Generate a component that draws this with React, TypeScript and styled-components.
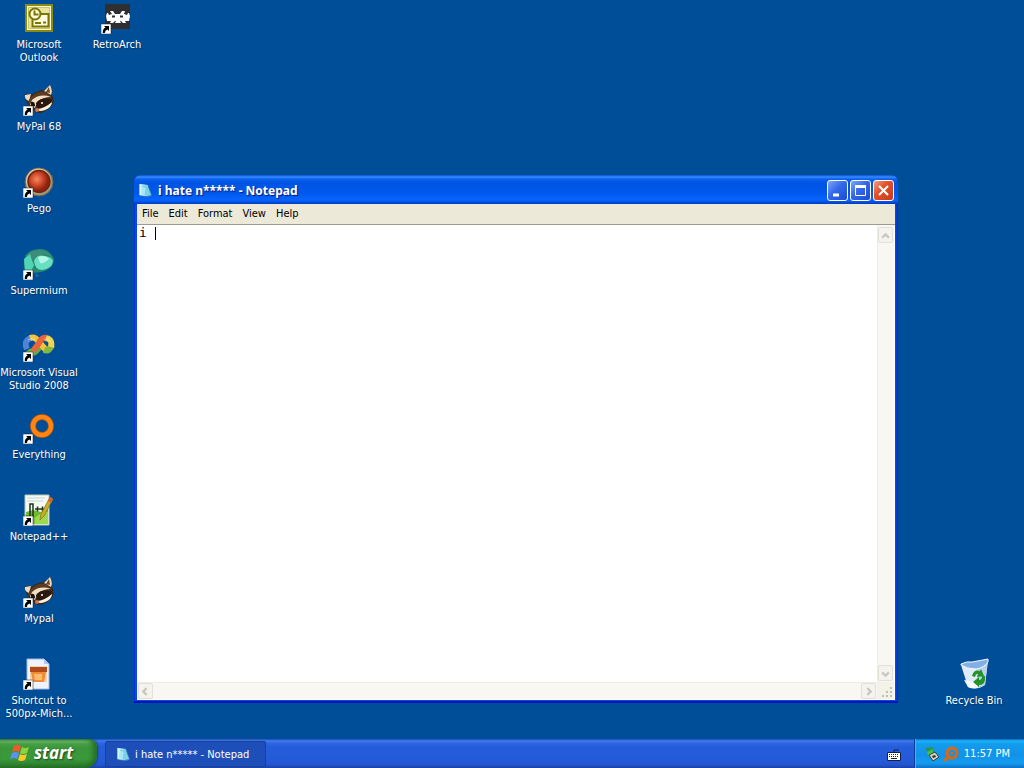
import React, { useState } from "react";
import styled, { createGlobalStyle, css } from "styled-components";

const Global = createGlobalStyle`
  * { box-sizing: border-box; }
  body { margin: 0; }
  button, input, textarea { font: inherit; margin: 0; }
  svg { display: block; flex: none; }
`;

const uiFont = css`
  font-family: "DejaVu Sans Condensed", Tahoma, sans-serif;
  font-size: 11px;
  line-height: 13px;
`;

const Screen = styled.div`
  display: flex;
  flex-direction: column;
  min-height: 100vh;
  background: #004e98;
  ${uiFont}
`;

const Desktop = styled.main`
  flex: 1;
  position: relative;
  display: flex;
  padding-right: 11px;
`;

const IconColumn = styled.div<{ $end?: boolean }>`
  display: flex;
  flex-direction: column;
  width: 78px;
  ${(p) => p.$end && css`margin-left: auto; padding-bottom: 1px; justify-content: flex-end;`}
`;

const Shortcut = styled.button`
  display: flex;
  flex-direction: column;
  align-items: center;
  gap: 4px;
  height: 82px;
  padding: 2px 0 0;
  border: 0;
  background: none;
  color: #fff;
  white-space: pre;
  text-shadow: 1px 1px 1px #003468;
`;

const NotepadWindow = styled.section`
  position: absolute;
  top: 175px;
  left: 134px;
  right: 126px;
  bottom: 36px;
  display: flex;
  flex-direction: column;
  padding: 0 3px 3px;
  border-radius: 7px 7px 0 0;
  background: linear-gradient(90deg, #0019cf 0, #0a4be8 1px, #0a46e6 2px, #0a46e6 calc(100% - 2px), #001fc0 100%);
  box-shadow: inset 0 -2px 0 #0016b8;
`;

const TitleBar = styled.header`
  display: flex;
  align-items: center;
  gap: 2px;
  height: 29px;
  margin: 0 -3px;
  padding: 2px 4px 0;
  border-radius: 7px 7px 0 0;
  background: linear-gradient(#0a4fd0 0, #3a8cff 2px, #0a62f0 4px, #0054e3 8px, #0058ec 18px, #0665ff 25px, #0450df 27px, #0038c0 29px);
`;

const Title = styled.h1`
  flex: 1;
  margin: 0;
  padding: 1px 0 0 3px;
  color: #fff;
  font-family: "Noto Sans", "Trebuchet MS", sans-serif;
  font-size: 12px;
  line-height: 18px;
  font-weight: 700;
  text-shadow: 1px 1px 1px #0a1883;
`;

const CaptionButton = styled.button<{ $close?: boolean }>`
  display: grid;
  place-items: center;
  width: 21px;
  height: 21px;
  padding: 0;
  border: 1px solid #fff;
  border-radius: 3px;
  background: ${(p) =>
    p.$close
      ? "linear-gradient(135deg, #f0a088 0, #e0532c 40%, #c83a14 100%)"
      : "linear-gradient(135deg, #7ea6f8 0, #3468ea 45%, #1c4cd0 100%)"};
`;
const Captions = styled.div`
  display: flex;
  gap: 2px;
`;

const MenuBar = styled.nav`
  display: flex;
  height: 20px;
  background: #ece9d8;
`;

const MenuItem = styled.button`
  padding: 0 5px 2px;
  border: 0;
  background: none;
  color: #000;
`;

const Editor = styled.div`
  flex: 1;
  position: relative;
  display: grid;
  grid-template-columns: 1fr 17px;
  grid-template-rows: 1fr 17px;
  padding-right: 1px;
  padding-bottom: 1px;
  border-top: 1px solid #9d9c92;
  background: #fefefd;
`;

const TextBox = styled.textarea`
  border: 0;
  outline: 0;
  resize: none;
  padding: 1px 2px;
  background: #fff;
  color: #000;
  font-family: "DejaVu Sans Mono", "Lucida Console", monospace;
  font-size: 13px;
  line-height: 14px;
  overflow: hidden;
`;

const Caret = styled.span`
  position: absolute;
  left: 18px;
  top: 2px;
  width: 1px;
  height: 13px;
  background: #000;
`;

const Track = styled.div<{ $horizontal?: boolean }>`
  display: flex;
  flex-direction: ${(p) => (p.$horizontal ? "row" : "column")};
  justify-content: space-between;
  padding: ${(p) => (p.$horizontal ? "0 1px" : "2px 0 1px")};
  background: #f8f7f2;
  border: 0 solid #eeede5;
  border-width: ${(p) => (p.$horizontal ? "1px 0 0" : "0 0 0 1px")};
`;

const ScrollButton = styled.button`
  display: grid;
  place-items: center;
  width: 15px;
  height: 16px;
  padding: 0;
  border: 1px solid #e2e0d6;
  border-radius: 2px;
  background: #f4f3ee;
`;

const Grip = styled.div`
  display: grid;
  place-items: end;
  background: #f3f2e8;
`;

const Taskbar = styled.footer`
  display: flex;
  height: 29px;
  background: linear-gradient(#1f48b8 0, #3f80ee 2px, #2e66e2 4px, #245ddb 8px, #245ad8 22px, #2355cc 26px, #1941a5 29px);
`;

const StartButton = styled.button`
  display: flex;
  align-items: center;
  gap: 3px;
  width: 97px;
  padding: 0 0 1px 10px;
  border: 0;
  border-radius: 0 8px 12px 0;
  background: linear-gradient(#2f7a30 0, #6dbb6a 2px, #48a046 5px, #3a963a 9px, #3b983b 20px, #2f8530 25px, #246c24 29px);
  box-shadow: inset -4px 0 5px #256f26, 1px 0 2px #1a3f90;
  color: #fff;
  font-family: "Noto Sans", "Trebuchet MS", sans-serif;
  font-size: 17px;
  line-height: 20px;
  font-style: italic;
  font-weight: 700;
  text-shadow: 1px 1px 2px #1a441a;
`;

const TaskButton = styled.button`
  display: flex;
  align-items: center;
  gap: 4px;
  width: 161px;
  height: 26px;
  margin: 2px auto 0 8px;
  padding: 0 10px;
  border: 1px solid #1a3f9c;
  border-radius: 2px;
  background: #1e4fb9;
  color: #fff;
  white-space: nowrap;
`;

const LanguageButton = styled.button`
  padding: 2px 13px 0;
  border: 0;
  background: none;
`;

const Tray = styled.div`
  display: flex;
  align-items: center;
  gap: 3px;
  padding: 0 14px 0 9px;
  border-left: 1px solid #0c3c9c;
  background: linear-gradient(#0d66c0 0, #19b4f8 2px, #139ced 5px, #1292e8 16px, #149cf0 24px, #0f6fc4 29px);
  box-shadow: inset 1px 0 0 #2cc0f8;
  color: #fff;
`;

const Clock = styled.time`
  padding-left: 2px;
`;

const Arrow = () => (
  <g>
    <path d="M0 22h10v10H0z" fill="#fff" stroke="#222" strokeWidth=".5" />
    <path d="M3 24h5v5L6.400 27.400Q4 28 3.800 31H1.800Q1.500 27 4.600 25.600z" fill="#000" />
  </g>
);

const Pic = ({ children }: { children: React.ReactNode }) => (
  <svg width="32" height="32" viewBox="0 0 32 32" aria-hidden="true">
    {children}
  </svg>
);

const Outlook = () => (
  <Pic>
    <path d="M3 3h26v26H3z" fill="#f7f5dd" stroke="#8c8a12" strokeWidth="2" />
    <path d="M5.500 5.500h21v21h-21z" fill="#e9e5a0" stroke="#c9c566" />
    <path d="M16 12h9.500v12.500h-16v-7" fill="#fffbe0" stroke="#7a7600" strokeWidth="2" />
    <circle cx="12" cy="12" r="5.500" fill="#fffbe0" stroke="#7a7600" strokeWidth="2" />
    <path d="M11.500 8.500v4h4M12 21h6M20 20.500h3" fill="none" stroke="#7a7600" strokeWidth="2" />
  </Pic>
);

const RetroArch = () => (
  <Pic>
    <path d="M4 2h25v25H4z" fill="#2f2e31" />
    <path d="M9 9h3l2 3h5l2-3h3l-1 3 3 1 1-2h1l1 3-1 5h-4l1 2h-3l-2-2h-1l1 2h-6l1-2h-1l-2 2H9l1-2H6l-1-5 1-3h1l1 2 3-1z" fill="#fff" />
    <path d="M11 13.500h3v2h-3zM19 13.500h3v2h-3z" fill="#2c2d33" />
    <Arrow />
  </Pic>
);

const Raccoon = () => (
  <Pic>
    <path d="M2 13Q1 9 4 10l4 1q7-5 14-5l5-5q3 4 2 10 3 6 0 11l-8 6q-8 3-11-3Q3 20 2 13z" fill="#3b2a1f" />
    <path d="M21 7l6-6q3 6 1 10z" fill="#f0d9b4" />
    <path d="M23 8l3-5 1 6z" fill="#6b4528" />
    <path d="M2 11l6-1-2 7q-5-2-4-6z" fill="#e9dcc3" />
    <path d="M8 13q8-7 16-5l4 6q-8-4-13-1l-5 8q-4 0-5-3z" fill="#5c3b22" />
    <path d="M9 16q8-7 19-3-8 0-14 5l-2 6-5-3z" fill="#f2e1c0" />
    <path d="M13 19q6-7 16-3l-3 5-11 4z" fill="#2b170e" />
    <path d="M15 25q7-1 14-7 0 5-7 8-5 2-8 0z" fill="#fff3dd" />
    <path d="M8 18q4-1 4 4l-4 2z" fill="#1b1210" />
    <circle cx="14" cy="26" r="2" fill="#d0764d" />
    <circle cx="19" cy="19" r="1" fill="#fff" />
    <Arrow />
  </Pic>
);

const Pego = () => (
  <Pic>
    <defs>
      <radialGradient id="pego" cx=".4" cy=".4">
        <stop offset="0" stopColor="#f58a63" />
        <stop offset=".6" stopColor="#cb4325" />
        <stop offset="1" stopColor="#8d2410" />
      </radialGradient>
    </defs>
    <circle cx="16" cy="16" r="14" fill="#9c9577" stroke="#6a6450" />
    <circle cx="15.500" cy="15" r="12.500" fill="#e0cb9a" />
    <circle cx="16" cy="15.500" r="11" fill="url(#pego)" stroke="#6e2414" strokeWidth="1.500" />
    <Arrow />
  </Pic>
);

const Supermium = () => (
  <Pic>
    <path d="M1 16Q1 2 16 1q10-1 15 10 0 8-9 12-12 4-20-1z" fill="#25886f" />
    <path d="M2 8Q8 1 18 2q9 1 12 9-7-7-14-3l-5 5Q7 6 2 8z" fill="#3b8d79" />
    <path d="M1 11l6-5q2 7 4 11l-3 7H2z" fill="#51d4b4" />
    <path d="M11 13q3-7 11-5 7 1 8 5-1 8-11 9-7 0-8-9z" fill="#67e0c2" />
    <path d="M15 9q7-3 11 2-5 5-9 4z" fill="#b4f6e5" />
    <path d="M12 25l5 3-4 1z" fill="#196d88" />
    <Arrow />
  </Pic>
);

const VisualStudio = () => (
  <Pic>
    <g fill="none" strokeWidth="6">
      <path d="M17 17L12 22Q8 24 5 20" stroke="#66aa43" />
      <path d="M4 19Q0 11 8 8" stroke="#4f83d8" />
      <path d="M7 8q5-2 9 4l7 8" stroke="#f2c43c" />
      <path d="M21 20q5 2 8-5" stroke="#86b840" />
      <path d="M28 17q2-9-7-9" stroke="#f2d34e" />
      <path d="M23 8q-4-1-7 5l-6 8" stroke="#e8643f" />
    </g>
    <path d="M5 10q4-3 7 0M21 9q4-1 7 3" fill="none" stroke="#fff" strokeOpacity=".5" />
    <Arrow />
  </Pic>
);

const Everything = () => (
  <Pic>
    <circle cx="19" cy="14" r="9" fill="none" stroke="#a55214" strokeWidth="6" />
    <circle cx="19" cy="14" r="9" fill="none" stroke="#ff8412" strokeWidth="4.500" />
    <Arrow />
  </Pic>
);

const NotepadPlus = () => (
  <Pic>
    <path d="M2 1h24v30H2z" fill="#f5faef" stroke="#b9c6b5" />
    <path d="M4 4h18M4 7h16" stroke="#c5d3e0" />
    <path d="M3 18l7-2 8 2 7-3v15H3z" fill="#6dbb2c" />
    <path d="M12 24q7-7 13-6v12H12z" fill="#9dd84e" />
    <path d="M7 23V10h3v13M12 15h5M14.500 12.500v5M17 15h5M19.500 12.500v5" fill="none" stroke="#1d3324" strokeWidth="1.500" />
    <path d="M27 3l3 2-9 17-4 4 1-6z" fill="#d5a824" stroke="#6c7d22" strokeWidth=".7" />
    <path d="M27 3l3 2-2 4-3-2z" fill="#e05a34" />
    <Arrow />
  </Pic>
);

const ImageFile = () => (
  <Pic>
    <path d="M4 1h17l5 5v25H4z" fill="#eef3ff" stroke="#a5b4dc" />
    <path d="M21 1v5h5z" fill="#b6c6ed" />
    <path d="M7 8h17v16H7z" fill="#f3d2b2" />
    <path d="M7 9h17v5H7z" fill="#b24a1b" />
    <path d="M8 14h15l-2 10H10z" fill="#ef8c35" />
    <path d="M11 16h8v6h-7z" fill="#ffbd70" />
    <Arrow />
  </Pic>
);

const RecycleBin = () => (
  <Pic>
    <path d="M3 7l15 3 12-8-3 25q-9 6-17 2z" fill="#dfeafa" />
    <path d="M18 10l12-8-3 25-7 3z" fill="#b9d0f0" />
    <path d="M3 6q6-3 11-2l16-3v3q-4 6-12 7Q9 11 3 7z" fill="#82afe6" stroke="#f4f9ff" />
    <path d="M6 22l4 7q4 2 9 1l1-5z" fill="#f6f9ff" />
    <path d="M14 18q2-7 8-5l1-2 3 7-7 1 1-3q-2-1-3 3zM27 18q1 9-6 9v2l-6-5 6-5v3q3 0 3-4z" fill="#229324" />
  </Pic>
);

const NotepadIcon = ({ size }: { size: number }) => (
  <svg width={size} height={size} viewBox="0 0 16 16" aria-hidden="true">
    <path d="M3 1l8 1 4 11-3 2-9-1z" fill="#3474ba" />
    <path d="M2 1l8 1v12l-8-1z" fill="#cdf3fa" />
    <path d="M4 3l6-1 4 11-7 1z" fill="#79d2e7" />
    <path d="M4 4l4 1-1 8-4-1z" fill="#a7e8f2" />
    <path d="M2 1v12" stroke="#e9fdff" />
  </svg>
);

const WindowsFlag = () => (
  <svg width="21" height="20" viewBox="0 0 21 20" aria-hidden="true">
    <path d="M4 3q4-2 7 0L9 9Q6 7 2 9z" fill="#f2582b" />
    <path d="M12 4q3 2 7 0l-2 6q-4 2-7 0z" fill="#8bd43d" />
    <path d="M2 10q4-2 7 0l-2 6q-3-2-7 0z" fill="#5b91f5" />
    <path d="M10 11q3 2 7 0l-2 6q-4 2-7 0z" fill="#fbc929" />
  </svg>
);

const shortcuts: [string, () => React.ReactElement][] = [
  ["Microsoft\nOutlook", Outlook],
  ["MyPal 68", Raccoon],
  ["Pego", Pego],
  ["Supermium", Supermium],
  ["Microsoft Visual\nStudio 2008", VisualStudio],
  ["Everything", Everything],
  ["Notepad++", NotepadPlus],
  ["Mypal", Raccoon],
  ["Shortcut to\n500px-Mich...", ImageFile],
];

const arrows = {
  up: "M1 6l3-3 3 3",
  down: "M1 3l3 3 3-3",
  left: "M5 1L2 4l3 3",
  right: "M3 1l3 3-3 3",
};

const Scroll = ({ dir }: { dir: keyof typeof arrows }) => (
  <ScrollButton aria-label={`Scroll ${dir}`}>
    <svg width="9" height="9" viewBox="0 0 8 8">
      <path d={arrows[dir]} fill="none" stroke="#c9c7bc" strokeWidth="2" />
    </svg>
  </ScrollButton>
);

const documentTitle = "i hate n***** - Notepad";

export default function App() {
  const [text, setText] = useState("i ");
  return (
    <Screen>
      <Global />
      <Desktop>
        <IconColumn>
          {shortcuts.map(([label, Icon]) => (
            <Shortcut key={label}>
              <Icon />
              <span>{label}</span>
            </Shortcut>
          ))}
        </IconColumn>
        <IconColumn>
          <Shortcut>
            <RetroArch />
            <span>RetroArch</span>
          </Shortcut>
        </IconColumn>
        <IconColumn $end>
          <Shortcut>
            <RecycleBin />
            <span>Recycle Bin</span>
          </Shortcut>
        </IconColumn>

        <NotepadWindow>
          <TitleBar>
            <NotepadIcon size={15} />
            <Title>{documentTitle}</Title>
            <Captions>
              <CaptionButton aria-label="Minimize">
                <svg width="15" height="15"><path d="M3 12h6" stroke="#fff" strokeWidth="3" /></svg>
              </CaptionButton>
              <CaptionButton aria-label="Maximize">
                <svg width="15" height="15">
                  <path d="M2.500 3.500h10v9h-10z" fill="none" stroke="#fff" />
                  <path d="M2 3.500h11" stroke="#fff" strokeWidth="3" />
                </svg>
              </CaptionButton>
              <CaptionButton $close aria-label="Close">
                <svg width="15" height="15"><path d="M3 3l9 9M12 3l-9 9" stroke="#fff" strokeWidth="2" /></svg>
              </CaptionButton>
            </Captions>
          </TitleBar>
          <MenuBar>
            {["File", "Edit", "Format", "View", "Help"].map((m) => (
              <MenuItem key={m}>{m}</MenuItem>
            ))}
          </MenuBar>
          <Editor>
            <TextBox aria-label="Document text" spellCheck={false} value={text} onChange={(e) => setText(e.target.value)} />
            <Track>
              <Scroll dir="up" />
              <Scroll dir="down" />
            </Track>
            <Track $horizontal>
              <Scroll dir="left" />
              <Scroll dir="right" />
            </Track>
            <Grip>
              <svg width="14" height="14">
                <path d="M10 3h2M6 7h2M10 7h2M2 11h2M6 11h2M10 11h2" stroke="#c2bfab" strokeWidth="2" />
              </svg>
            </Grip>
            <Caret />
          </Editor>
        </NotepadWindow>
      </Desktop>

      <Taskbar>
        <StartButton>
          <WindowsFlag />
          start
        </StartButton>
        <TaskButton>
          <NotepadIcon size={15} />
          {documentTitle}
        </TaskButton>
        <LanguageButton aria-label="Keyboard layout">
          <svg width="14" height="13" viewBox="0 0 14 13">
            <path d="M7 4V2h5" fill="none" stroke="#14214d" />
            <path d="M.5 4.500h13v8H.5z" fill="#fff" stroke="#14214d" />
            <path d="M2 6.500h10M2 8.500h10" stroke="#222" strokeDasharray="1 1" />
            <path d="M4 10.500h6" stroke="#222" />
          </svg>
        </LanguageButton>
        <Tray>
          <svg width="16" height="16" viewBox="0 0 16 16" aria-hidden="true">
            <path d="M1 2l8-1 1 6-5 2z" fill="#27964a" />
            <path d="M3 6l6-3v7l-4 1z" fill="#45bd56" />
            <path d="M5 9l6-3 4 5-6 4z" fill="#cfd3c4" stroke="#38442f" />
            <path d="M8 10l3-1 1 2-3 1z" fill="#333" />
          </svg>
          <svg width="16" height="16" viewBox="0 0 16 16" aria-hidden="true">
            <path d="M1 15l5-5" stroke="#e0660b" strokeWidth="3" />
            <circle cx="9" cy="7" r="5" fill="none" stroke="#e0660b" strokeWidth="3" />
            <circle cx="9" cy="7" r="1.500" fill="#e0660b" />
          </svg>
          <Clock>11:57 PM</Clock>
        </Tray>
      </Taskbar>
    </Screen>
  );
}
